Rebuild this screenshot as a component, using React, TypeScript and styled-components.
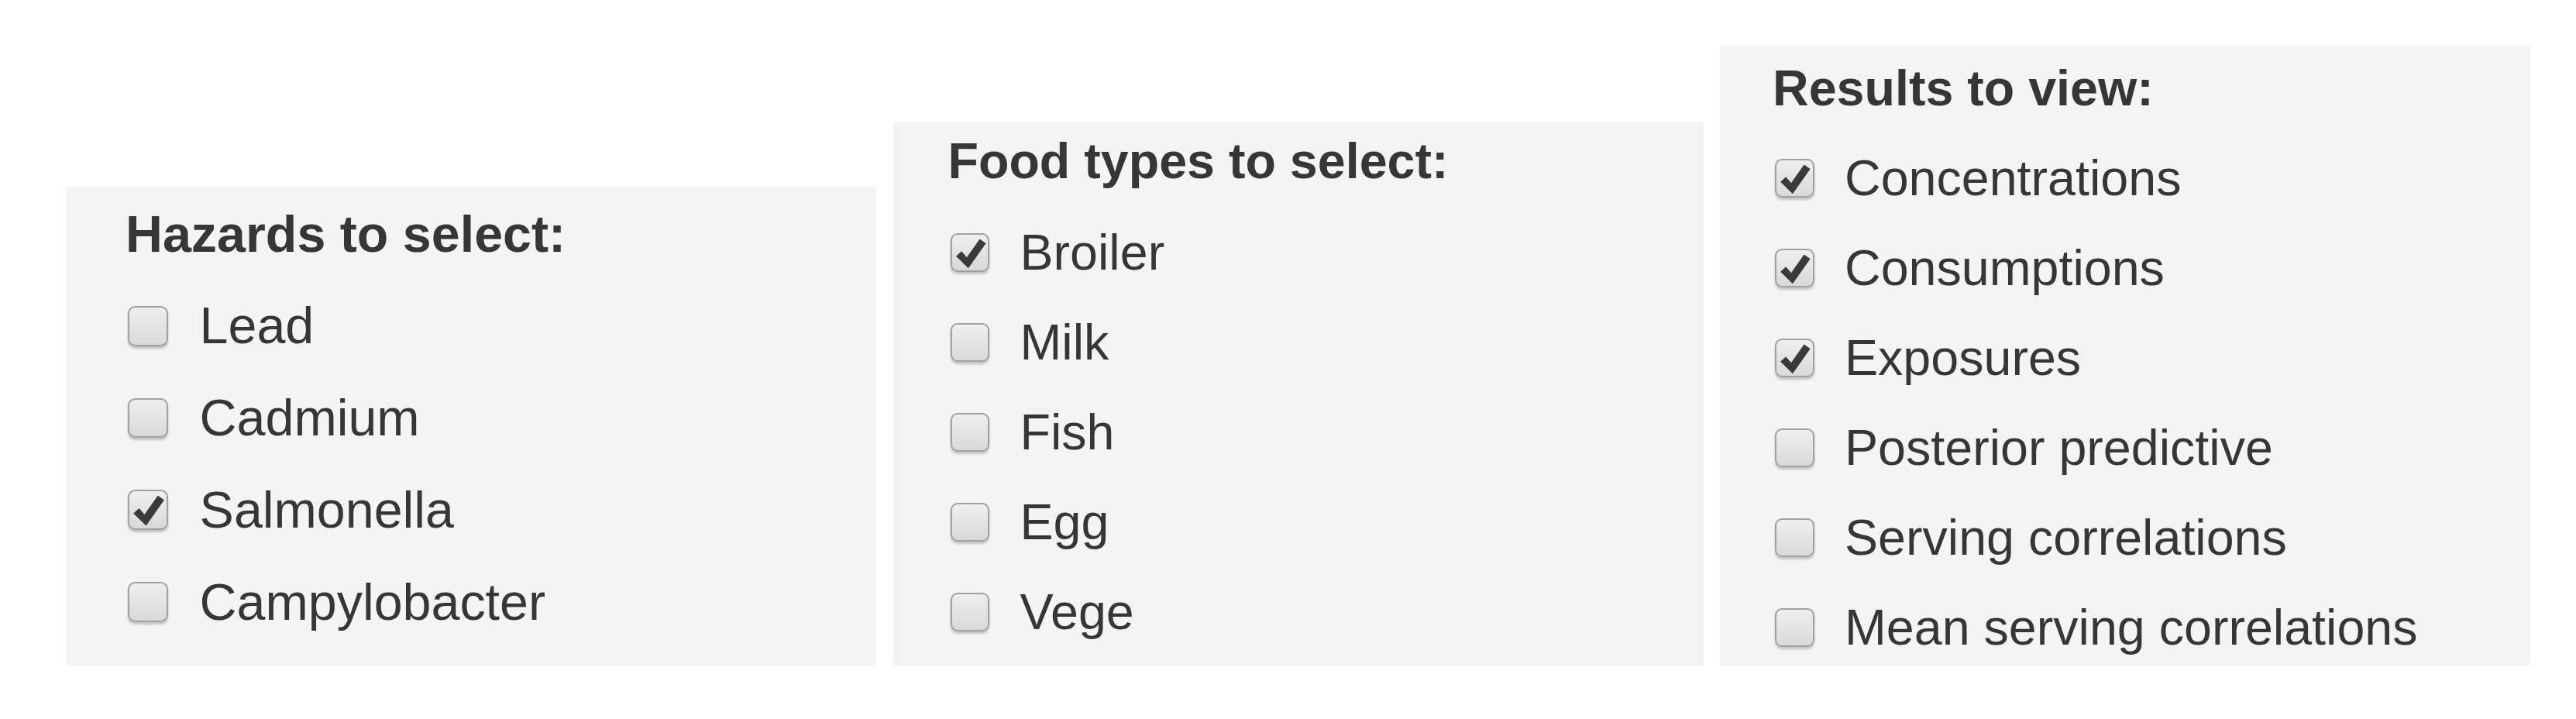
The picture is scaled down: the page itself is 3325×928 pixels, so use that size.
import React from "react";
import styled, { createGlobalStyle } from "styled-components";

const Global = createGlobalStyle`
  html, body {
    margin: 0;
    padding: 0;
    background: #ffffff;
  }
  body {
    font-family: "Liberation Sans", Arial, Helvetica, sans-serif;
    color: #363636;
  }
`;

const Page = styled.div`
  box-sizing: border-box;
  height: 928px;
  width: 3325px;
  padding: 0 0 69px 85px;
  display: flex;
  align-items: flex-end;
  gap: 21.5px;
`;

const Panel = styled.section<{
  $fs: number;
  $height: number;
  $padTop: number;
  $padLeft: number;
}>`
  box-sizing: border-box;
  width: 1046px;
  height: ${(p) => p.$height}px;
  overflow: hidden;
  background: #f4f4f4;
  font-size: ${(p) => p.$fs}px;
  padding: ${(p) => p.$padTop}px 20px 0 ${(p) => p.$padLeft}px;
  display: flex;
  flex-direction: column;
`;

const Heading = styled.div<{ $gapBelow: number }>`
  font-weight: bold;
  line-height: 1.4375em;
  margin-bottom: ${(p) => p.$gapBelow}px;
  white-space: nowrap;
`;

const Option = styled.label<{ $rowH: number }>`
  display: flex;
  align-items: center;
  height: ${(p) => p.$rowH}px;
  line-height: ${(p) => p.$rowH}px;
  white-space: nowrap;
  flex: none;
`;

const Box = styled.span<{ $checked: boolean }>`
  box-sizing: border-box;
  flex: none;
  width: 0.78em;
  height: 0.78em;
  margin-left: 0.05em;
  margin-right: 0.61em;
  border: 2px solid #a0a0a0;
  border-radius: 0.14em;
  background: linear-gradient(#efefef, #d9d9d9);
  box-shadow: 0 3px 3px rgba(0, 0, 0, 0.2);
  display: flex;
  align-items: center;
  justify-content: center;
  svg {
    display: ${(p) => (p.$checked ? "block" : "none")};
    width: 100%;
    height: 100%;
  }
`;

const Text = styled.span`
  font-weight: normal;
`;

const Check = () => (
  <svg viewBox="0 0 50 50" aria-hidden="true">
    <path
      d="M6 30 L13 23.5 L20.5 32 L38.5 6.5 L46.5 12 L22.5 46 Z"
      fill="#3a3a3a"
      stroke="#3a3a3a"
      strokeWidth="1"
      strokeLinejoin="round"
    />
  </svg>
);

type Item = { label: string; checked: boolean };

type PanelCfg = {
  title: string;
  items: Item[];
  fs: number;
  height: number;
  padTop: number;
  padLeft: number;
  gapBelow: number;
  rowH: number;
};

const panels: PanelCfg[] = [
  {
    title: "Hazards to select:",
    items: [
      { label: "Lead", checked: false },
      { label: "Cadmium", checked: false },
      { label: "Salmonella", checked: true },
      { label: "Campylobacter", checked: false },
    ],
    fs: 66.4,
    height: 618,
    padTop: 14,
    padLeft: 77,
    gapBelow: 11,
    rowH: 118.7,
  },
  {
    title: "Food types to select:",
    items: [
      { label: "Broiler", checked: true },
      { label: "Milk", checked: false },
      { label: "Fish", checked: false },
      { label: "Egg", checked: false },
      { label: "Vege", checked: false },
    ],
    fs: 64.6,
    height: 702,
    padTop: 5,
    padLeft: 71,
    gapBelow: 13,
    rowH: 116,
  },
  {
    title: "Results to view:",
    items: [
      { label: "Concentrations", checked: true },
      { label: "Consumptions", checked: true },
      { label: "Exposures", checked: true },
      { label: "Posterior predictive", checked: false },
      { label: "Serving correlations", checked: false },
      { label: "Mean serving correlations", checked: false },
    ],
    fs: 64.6,
    height: 800,
    padTop: 9,
    padLeft: 68,
    gapBelow: 11,
    rowH: 116,
  },
];

export default function App() {
  return (
    <>
      <Global />
      <Page>
        {panels.map((p) => (
          <Panel
            key={p.title}
            $fs={p.fs}
            $height={p.height}
            $padTop={p.padTop}
            $padLeft={p.padLeft}
          >
            <Heading $gapBelow={p.gapBelow}>{p.title}</Heading>
            {p.items.map((it) => (
              <Option key={it.label} $rowH={p.rowH}>
                <Box $checked={it.checked}>
                  <Check />
                </Box>
                <Text>{it.label}</Text>
              </Option>
            ))}
          </Panel>
        ))}
      </Page>
    </>
  );
}
